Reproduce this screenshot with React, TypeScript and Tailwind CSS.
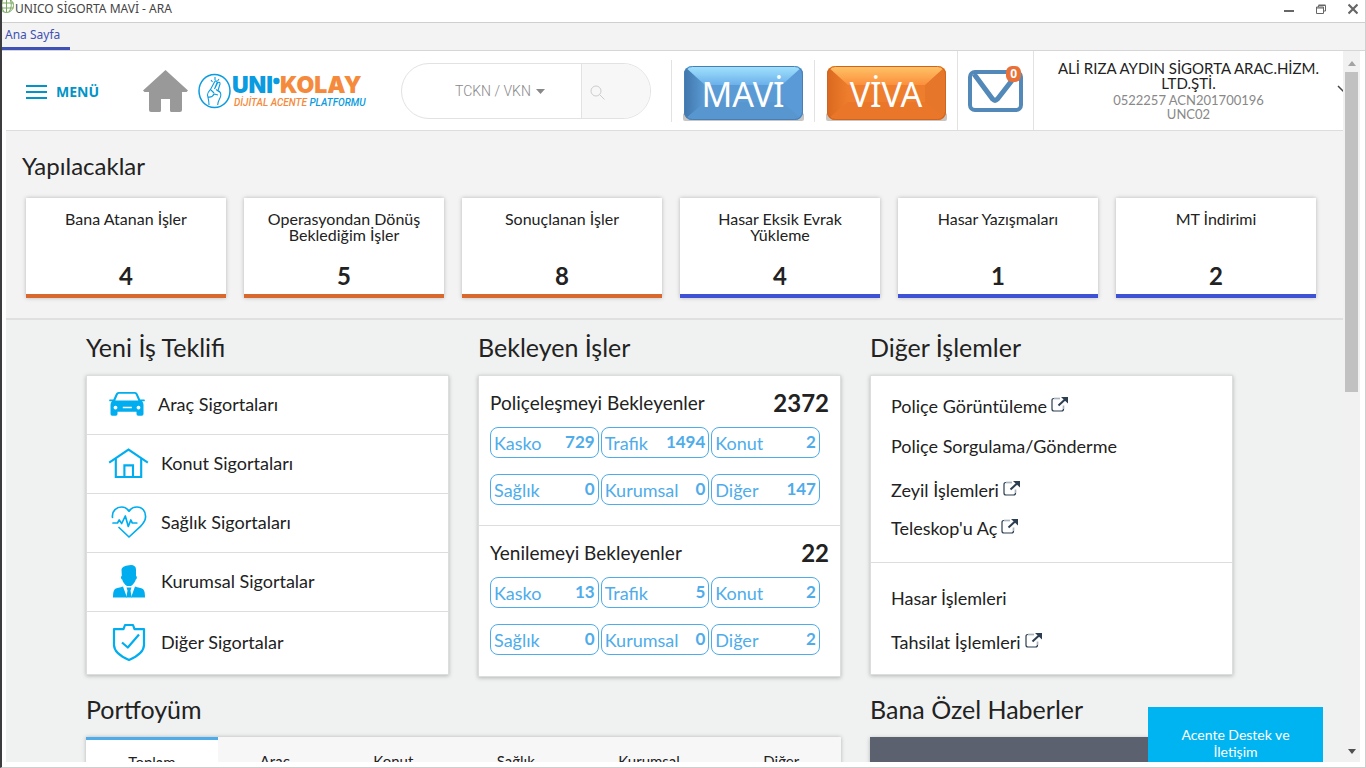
import type { ReactNode } from 'react';

const BLUE = '#00aeef';

type Todo = { label: string; count: number; tone: 'orange' | 'blue' };

const todos: Todo[] = [
  { label: 'Bana Atanan İşler', count: 4, tone: 'orange' },
  { label: 'Operasyondan Dönüş Beklediğim İşler', count: 5, tone: 'orange' },
  { label: 'Sonuçlanan İşler', count: 8, tone: 'orange' },
  { label: 'Hasar Eksik Evrak Yükleme', count: 4, tone: 'blue' },
  { label: 'Hasar Yazışmaları', count: 1, tone: 'blue' },
  { label: 'MT İndirimi', count: 2, tone: 'blue' },
];

const pending = [
  {
    title: 'Poliçeleşmeyi Bekleyenler',
    total: 2372,
    items: [['Kasko', 729], ['Trafik', 1494], ['Konut', 2], ['Sağlık', 0], ['Kurumsal', 0], ['Diğer', 147]],
  },
  {
    title: 'Yenilemeyi Bekleyenler',
    total: 22,
    items: [['Kasko', 13], ['Trafik', 5], ['Konut', 2], ['Sağlık', 0], ['Kurumsal', 0], ['Diğer', 2]],
  },
];

const tabs = ['Toplam', 'Araç', 'Konut', 'Sağlık', 'Kurumsal', 'Diğer'];

function CarIcon() {
  return (
    <svg width="36" height="26" viewBox="0 0 36 26" fill={BLUE} aria-hidden="true">
      <path
        fillRule="evenodd"
        d="M9.5 1h16.500q1.800 0 2.600 1.700l2.600 5.800h4q.6 0 .6.6v.6q0 .6-.6.6h-2.200q1.500 1.300 1.500 3.500v9.200q0 1.700-1.700 1.700h-3.600q-1.700 0-1.700-1.700v-2.200h-19v2.200q0 1.700-1.700 1.700h-3.600q-1.700 0-1.700-1.700v-9.200q0-2.200 1.500-3.500h-2.200q-.6 0-.6-.6v-.6q0-.6.6-.6h3.500l2.600-5.800q.8-1.700 2.600-1.700zM10 2.800q-.8 0-1.100.8l-2.600 6h23l-2.600-6q-.3-.8-1.100-.8zM6.500 14.700a1.900 1.900 0 1 0 .01 0zM29.500 14.700a1.900 1.900 0 1 0 .01 0zM13.800 15.800v1.400h9v-1.400z"
      />
    </svg>
  );
}

function HouseIcon() {
  return (
    <svg width="42" height="32" viewBox="0 0 42 32" fill="none" stroke={BLUE} strokeWidth="2.200" aria-hidden="true">
      <path d="M1.200 15.600 21 2.200l19.800 13.400" />
      <path d="M8 11.500V30.300h26V11.500" />
      <path d="M16.800 30V18.400h8.800V30" />
    </svg>
  );
}

function HeartIcon() {
  return (
    <svg width="36" height="32" viewBox="0 0 36 32" fill="none" stroke={BLUE} strokeWidth="1.700" strokeLinecap="round" strokeLinejoin="round" aria-hidden="true">
      <path d="M1.500 11.500C.6 4.500 6 1 10.500 1c3.500 0 6 1.700 7.500 4.200C19.500 2.700 22.500 1 26 1c5 0 9 4 8.500 10.500-.3 4-3 6.800-5 8.800L18 31 8 21.500" />
      <path d="M2 17h4.500l1.700-3 2.500 3.500 3.600-7.500 3 10.500 2.500-6.500 1.500 3h4.500" />
    </svg>
  );
}

function PersonIcon() {
  return (
    <svg width="34" height="34" viewBox="0 0 34 34" fill={BLUE} aria-hidden="true">
      <path d="M9.500 5.500C10.500 2 14 1.500 19 1c3 .2 5 1.500 5 4.500v6.500c1.200 0 1.200 3-.2 3.500-.6 2.500-3 5.500-4.800 6.500h-4c-2-1-4.300-4-4.800-6.500-1.500-.5-1.600-3.500-.4-3.500z" />
      <path d="M1 33.500c0-4 .3-7 2-8.500 1.800-1.200 5-1.200 8-2.500l4 11zM33 33.500c0-4-.3-7-2-8.500-1.800-1.200-5-1.200-8-2.500l-4 11z" />
      <path d="M14.500 23.500h5l-1 3 1.200 7h-5.400l1.200-7z" />
    </svg>
  );
}

function ShieldIcon() {
  return (
    <svg width="34" height="38" viewBox="0 0 34 38" fill="none" stroke={BLUE} strokeWidth="2.200" strokeLinejoin="round" aria-hidden="true">
      <path d="M13 2h8l1.500 4.200H32V22c0 7-7 11.500-15 15C9 33.500 2 29 2 22V6.200h9.500z" />
      <path d="m10 19.500 5.800 5L27 11.500" />
    </svg>
  );
}

function ExternalIcon() {
  return (
    <svg className="mb-1" width="17" height="15" viewBox="0 0 17 15" fill="none" aria-hidden="true">
      <path d="M9 1.500H3" stroke="#aab2bd" strokeWidth="1.700" />
      <path d="M3 1.500Q1 1.500 1 3.500v8.500q0 2 2 2h7.500q2 0 2-2" stroke="#2c3e50" strokeWidth="1.200" />
      <path d="M12.500 12V8.500" stroke="#aab2bd" strokeWidth="1.700" />
      <path d="M7.500 8.500 14 2.500" stroke="#2c3e50" strokeWidth="2" />
      <path d="M10 0h7v6.500z" fill="#2c3e50" />
    </svg>
  );
}

function GlossyButton({ label, tone }: { label: string; tone: 'blue' | 'orange' }) {
  const blue = tone === 'blue';
  const mid = blue ? '#5b9bd5' : '#ee7d2d';
  return (
    <button type="button" className="relative h-14 w-[121px] pt-1">
      <svg className="absolute inset-0" width="121" height="56" viewBox="0 0 121 56" aria-hidden="true">
        <defs>
          <linearGradient id={`top-${tone}`} x1="0" y1="0" x2="0" y2="1">
            <stop offset="0" stopColor={blue ? '#a6e6ff' : '#ffc76a'} />
            <stop offset="1" stopColor={blue ? '#6bb0ea' : '#fb8f3d'} />
          </linearGradient>
          <linearGradient id={`side-${tone}`} x1="0" y1="0" x2="1" y2="0">
            <stop offset="0" stopColor={blue ? '#3f74a8' : '#d9681f'} />
            <stop offset="1" stopColor={mid} />
          </linearGradient>
          <clipPath id={`clip-${tone}`}>
            <rect x="1" y="1" width="119" height="54" rx="8" />
          </clipPath>
        </defs>
        <rect x="0" y="48" width="121" height="8" rx="2" fill="#c9c5c2" />
        <g clipPath={`url(#clip-${tone})`}>
          <rect width="121" height="56" fill={mid} />
          <path d="M0 0 22 20v17L0 56z" fill={`url(#side-${tone})`} />
          <path d="M121 0 99 20v17l22 19z" fill={blue ? '#5a9ad6' : '#e5762a'} />
          <path d="M0 0h121L99 20H22z" fill={`url(#top-${tone})`} />
          <path d="M0 56h121L99 37H22z" fill={blue ? '#5896d0' : '#ea7629'} />
        </g>
        <rect x="1.500" y="1.500" width="118" height="53" rx="8" fill="none" stroke={blue ? '#477fb5' : '#cf641f'} />
      </svg>
      <span className="relative font-['Noto_Sans',sans-serif] text-[34px] leading-none text-white">{label}</span>
    </button>
  );
}

function TitleBar() {
  return (
    <header className="flex h-[23px] shrink-0 items-start border-b border-[#cfcfcf] bg-white font-['Noto_Sans',sans-serif] text-xs text-[#444]">
      <svg width="13" height="14" viewBox="0 0 13 14" fill="none" stroke="#7aa861" aria-hidden="true">
        <circle cx="4.500" cy="5.500" r="7" />
        <path d="M-1 3h12.500M-1 8h12.500M4.500-1v13.500M1-1q-3 7 1 13M8-1q3 7-1 13" />
      </svg>
      <h1 className="leading-[17px]">UNICO SİGORTA MAVİ - ARA</h1>
      <div className="ml-auto flex items-center gap-[21px] pt-0.5 pr-[7px] text-[#666]">
        <button type="button" aria-label="Küçült">
          <svg width="10" height="14" viewBox="0 0 10 14"><path d="M0 9h10" stroke="currentColor" strokeWidth="2" /></svg>
        </button>
        <button type="button" aria-label="Önceki boyut">
          <svg width="12" height="14" viewBox="0 0 12 14" fill="none" stroke="currentColor">
            <path d="M1.500 5h7v6.500h-7zM1.500 6h7M3.500 5V3.500h7v5.500h-2M3.500 3h7" />
          </svg>
        </button>
        <button type="button" aria-label="Kapat">
          <svg width="10" height="14" viewBox="0 0 10 14"><path d="m.5 2.500 9 9m0-9-9 9" stroke="currentColor" strokeWidth="2.200" /></svg>
        </button>
      </div>
    </header>
  );
}

function Logo() {
  return (
    <a href="#unikolay" className="flex w-[163px] shrink-0 items-center gap-px">
      <svg className="shrink-0" width="33" height="36" viewBox="0 0 33 36" fill="none" stroke="#0a9be0" aria-hidden="true">
        <ellipse cx="16.500" cy="18" rx="15.500" ry="16.500" strokeWidth="1.500" />
        <path
          d="M11 32c0-5-1-7-1.500-10 0-3 1.500-4 3-5.500l4-7.500c1-2 3-1 2.500.8l-2.500 6.200 3-6c1-1.500 2.800-.6 2.500 1l-2 6.500c2 1 3.200 3 2.700 5.500-.5 3-2.700 4-3 9M10 24c3 .5 5-.5 6-3l4 1M13 17l3 3m2-3.500 3.500 2.500M13 7l1.500 2M17 4v3M21 6l-1.500 2"
          strokeWidth="1.100"
        />
      </svg>
      <span className="flex flex-col pt-1 whitespace-nowrap">
        <span className="flex items-center font-['Inter',sans-serif] text-[23px] leading-5 font-black text-[#0a9be0]">
          UNI
          <svg className="mb-2 shrink-0" width="7" height="8" viewBox="0 0 7 8" aria-hidden="true"><circle cx="3.500" cy="4" r="3.200" fill="#0a9be0" /></svg>
          <span className="text-[#f58a3c]">KOLAY</span>
        </span>
        <span className="pl-0.5 font-['Roboto',sans-serif] text-[10px] leading-4 font-medium text-[#0a9be0] italic">
          <span className="text-[#f58a3c]">DİJİTAL ACENTE</span> PLATFORMU
        </span>
      </span>
    </a>
  );
}

function AppHeader() {
  return (
    <div className="flex h-20 items-center border-b border-[#dcdedd] bg-white">
      <button type="button" className="flex w-[137px] shrink-0 items-center gap-[9px] pt-0.5 pl-5 text-[#0094c9]">
        <svg width="21" height="16" viewBox="0 0 21 16" stroke="currentColor" strokeWidth="2" aria-hidden="true">
          <path d="M0 2h21M0 8h21M0 14h21" />
        </svg>
        <span className="font-['Noto_Sans',sans-serif] text-sm font-bold">MENÜ</span>
      </button>
      <a href="#ana-sayfa" aria-label="Ana Sayfa" className="mr-2.5 shrink-0">
        <svg width="45" height="42" viewBox="0 0 45 42" fill="#999" aria-hidden="true">
          <path d="M22.500 0 45 20.500 43.500 22H39v18q0 2-2 2H28.500q-1.500 0-1.500-1.500V29H18v11.500q0 1.500-1.500 1.500H8q-2 0-2-2V22H1.500L0 20.500z" />
        </svg>
      </a>
      <Logo />
      <form className="ml-10 flex h-14 w-[250px] shrink-0 overflow-hidden rounded-full border border-[#e2e2e2] bg-white font-['Roboto',sans-serif]">
        <span className="relative w-[179px]">
          <select aria-label="Arama türü" className="h-full w-full appearance-none bg-transparent pl-[53px] text-sm font-light text-[#888] outline-none">
            <option>TCKN / VKN</option>
          </select>
          <svg className="pointer-events-none absolute top-[25px] right-9" width="9" height="5" viewBox="0 0 9 5" fill="#888" aria-hidden="true"><path d="M0 0h9L4.500 5z" /></svg>
        </span>
        <button type="button" aria-label="Ara" className="flex flex-1 items-center border-l border-[#e2e2e2] bg-[#f7f7f7] pt-1 pl-2">
          <svg width="15" height="15" viewBox="0 0 15 15" fill="none" stroke="#ccc" aria-hidden="true"><circle cx="6" cy="6" r="5" /><path d="m9.500 9.500 5 5" /></svg>
        </button>
      </form>
      <div className="ml-5 flex h-[62px] w-[143px] shrink-0 items-center justify-center border-l border-[#e2e2e2] pt-1"><GlossyButton label="MAVİ" tone="blue" /></div>
      <div className="flex h-[62px] w-[143px] shrink-0 items-center justify-center border-l border-[#e2e2e2] pt-1"><GlossyButton label="VİVA" tone="orange" /></div>
      <div className="flex h-full w-[76px] shrink-0 items-center justify-center border-l border-[#e2e2e2]">
        <button type="button" aria-label="Mesajlar" className="relative">
          <svg width="55" height="42" viewBox="0 0 55 42" fill="none" stroke="#5289b9" strokeLinejoin="round" aria-hidden="true">
            <rect x="2" y="2" width="51" height="38" rx="5" strokeWidth="4" />
            <path d="m6 4 18.500 25q2.500 2.500 5 0L49 4" strokeWidth="5" />
          </svg>
          <span className="absolute -top-1 right-0.5 rounded-md bg-[#e8713a] px-1 font-['Noto_Sans',sans-serif] text-xs leading-4 font-bold text-white">0</span>
        </button>
      </div>
      <div className="relative flex h-full min-w-0 flex-1 flex-col overflow-hidden border-l border-[#e2e2e2] px-5 pt-2.5 text-center">
        <p className="text-[15px] leading-[15px] text-[#222]">ALİ RIZA AYDIN SİGORTA ARAC.HİZM. LTD.ŞTİ.</p>
        <p className="mt-0.5 text-[13px] leading-[14px] text-[#888]">0522257 ACN201700196<br />UNC02</p>
        <svg className="absolute top-[34px] -right-2" width="14" height="9" viewBox="0 0 14 9" fill="none" stroke="#444" strokeWidth="1.500" aria-hidden="true"><path d="m1 1 6 6 6-6" /></svg>
      </div>
    </div>
  );
}

function TodoCard({ todo }: { todo: Todo }) {
  const border = todo.tone === 'orange' ? 'border-[#d9682f]' : 'border-[#3f51d5]';
  return (
    <a href="#is" className={`flex h-[100px] flex-col items-center justify-between border-b-4 bg-white px-5 pt-[13px] pb-1.5 text-center shadow-[0_0_4px_rgba(0,0,0,0.25)] ${border}`}>
      <span className="text-base leading-4">{todo.label}</span>
      <strong className="text-2xl leading-6 font-bold">{todo.count}</strong>
    </a>
  );
}

const cardClass = 'border border-[#dcdedd] bg-white shadow-[0_1px_4px_rgba(0,0,0,0.25)]';

function Column({ title, children }: { title: string; children: ReactNode }) {
  return (
    <section className="min-w-0">
      <h2 className="mb-2.5 text-[25px] leading-9">{title}</h2>
      {children}
    </section>
  );
}

function ProductRow({ icon, label, wide }: { icon: ReactNode; label: string; wide?: boolean }) {
  return (
    <li className="border-b border-[#dcdedd] last:border-b-0 last:py-0.5">
      <a href="#teklif" className={`flex h-[58px] items-center pb-0.5 text-lg ${wide ? 'gap-[13px] pl-[22px]' : ''}`}>
        {wide ? icon : <span className="mr-3 ml-[21px] flex w-[41px] justify-center">{icon}</span>}
        {label}
      </a>
    </li>
  );
}

function LinkItem({ label, external, className = '' }: { label: string; external?: boolean; className?: string }) {
  return (
    <li className={className}>
      <a href="#islem" className="flex items-center gap-1 text-lg leading-6">
        {label}
        {external && <ExternalIcon />}
      </a>
    </li>
  );
}

export default function App() {
  return (
    <div className="flex h-screen flex-col overflow-hidden border-r border-b border-l-2 border-r-[#cfcfcf] border-b-[#cfcfcf] border-l-[#3c3c3e] bg-white font-['Lato',sans-serif] text-[#222]">
      <TitleBar />
      <nav className="flex h-7 shrink-0 border-b border-[#d6d6d6] bg-[#f3f3f3] font-['Noto_Sans',sans-serif] text-xs">
        <a href="#ana-sayfa" className="w-[68px] border-b-[3px] border-[#3f51b5] pl-[3px] leading-6 text-[#3f51b5]">Ana Sayfa</a>
      </nav>
      <div className="flex min-h-0 flex-1 pr-[5px] pb-[5px] pl-1">
        <main className="relative min-w-0 flex-1 overflow-hidden bg-[#f0f2f1]">
          <AppHeader />
          <section className="border-b-2 border-[#e0e0e0] bg-[#f3f3f3] pt-5 pr-[27px] pb-5 pl-5">
            <h2 className="-ml-1 mb-[17px] text-2xl leading-[30px]">Yapılacaklar</h2>
            <div className="grid grid-cols-6 gap-[18px]">
              {todos.map((t) => <TodoCard key={t.label} todo={t} />)}
            </div>
          </section>

          <div className="grid grid-cols-3 gap-x-[29px] pt-[9px] pr-[110px] pl-20">
            <Column title="Yeni İş Teklifi">
              <ul className={cardClass}>
                <ProductRow wide icon={<CarIcon />} label="Araç Sigortaları" />
                <ProductRow icon={<HouseIcon />} label="Konut Sigortaları" />
                <ProductRow icon={<HeartIcon />} label="Sağlık Sigortaları" />
                <ProductRow icon={<PersonIcon />} label="Kurumsal Sigortalar" />
                <ProductRow icon={<ShieldIcon />} label="Diğer Sigortalar" />
              </ul>
            </Column>

            <Column title="Bekleyen İşler">
              <div className={cardClass}>
                {pending.map((group) => (
                  <div key={group.title} className="h-[150px] border-b border-[#dcdedd] pt-[11px] pl-[11px] last:border-b-0">
                    <div className="mr-[11px] flex h-8 items-center justify-between">
                      <h3 className="text-[19px]">{group.title}</h3>
                      <strong className="text-2xl font-bold">{group.total}</strong>
                    </div>
                    <ul className="mt-2 mr-5 grid grid-cols-3 gap-x-0.5 gap-y-4">
                      {group.items.map(([name, count]) => (
                        <li key={name}>
                          <a href="#bekleyen" className="flex h-[31px] items-center justify-between rounded-lg border border-[#4facea] px-[3px] text-lg text-[#4facea]">
                            {name}
                            <b className="text-[17px]">{count}</b>
                          </a>
                        </li>
                      ))}
                    </ul>
                  </div>
                ))}
              </div>
            </Column>

            <Column title="Diğer İşlemler">
              <div className={cardClass}>
                <ul className="border-b border-[#dcdedd] px-5 pt-[18px] pb-[22px]">
                  <LinkItem label="Poliçe Görüntüleme" external className="mb-4" />
                  <LinkItem label="Poliçe Sorgulama/Gönderme" className="mb-5" />
                  <LinkItem label="Zeyil İşlemleri" external className="mb-3.5" />
                  <LinkItem label="Teleskop'u Aç" external />
                </ul>
                <ul className="px-5 pt-[23px] pb-5">
                  <LinkItem label="Hasar İşlemleri" className="mb-5" />
                  <LinkItem label="Tahsilat İşlemleri" external />
                </ul>
              </div>
            </Column>
          </div>

          <div className="grid grid-cols-3 gap-x-[29px] pt-3.5 pr-[110px] pl-20">
            <div className="col-span-2">
              <Column title="Portfoyüm">
                <div role="tablist" className="flex h-12 bg-[#f7f7f7] text-[15px] shadow-[0_0_4px_rgba(0,0,0,0.25)]">
                  {tabs.map((tab, i) => (
                    <button
                      key={tab}
                      type="button"
                      role="tab"
                      aria-selected={i === 0}
                      className={i === 0 ? 'w-[132px] border-t-[3px] border-[#4facea] bg-white' : 'flex-auto'}
                    >
                      {tab}
                    </button>
                  ))}
                </div>
              </Column>
            </div>
            <Column title="Bana Özel Haberler">
              <div className="h-[200px] bg-[#5c6170] shadow-[0_1px_4px_rgba(0,0,0,0.25)]" />
            </Column>
          </div>

          <button type="button" className="absolute right-5 bottom-0 h-[55px] w-[175px] bg-[#00b4f1] px-6 pt-4 text-sm leading-[17px] text-white">
            Acente Destek ve İletişim
          </button>
        </main>
        <div aria-hidden="true" className="flex w-[17px] shrink-0 flex-col items-center bg-[#f1f1f1] py-1">
          <svg className="my-1.5 shrink-0" width="8" height="5" viewBox="0 0 8 5" fill="#a3a3a3"><path d="M0 5h8L4 0z" /></svg>
          <div className="h-80 w-[13px] bg-[#c1c1c1]" />
          <svg className="mt-auto mb-1 shrink-0" width="8" height="5" viewBox="0 0 8 5" fill="#505050"><path d="M0 0h8L4 5z" /></svg>
        </div>
      </div>
    </div>
  );
}
